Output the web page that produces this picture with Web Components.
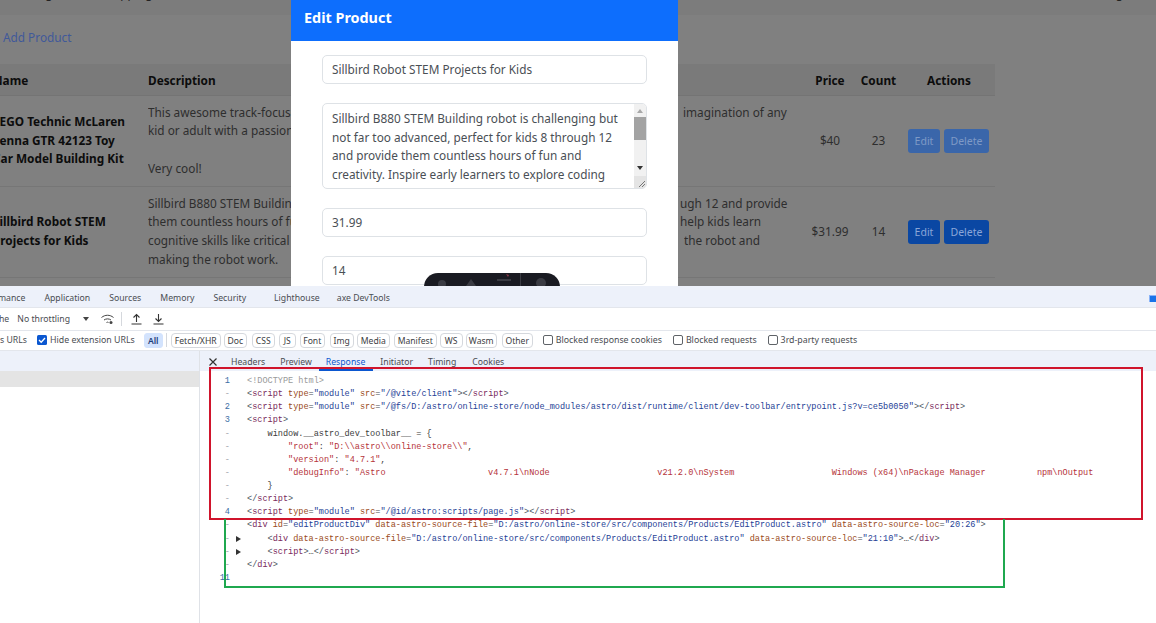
<!DOCTYPE html>
<html>
<head>
<meta charset="utf-8">
<style>
html, body { margin: 0; height: 100%; background: #fff; overflow: hidden; }
body { font-family: "Noto Sans", "Open Sans", sans-serif; }
</style>
</head>
<body>
<store-view>
  <product-row slot="rows" price="$40" count="23" faded>
    <span slot="name">LEGO Technic McLaren<br>Senna GTR 42123 Toy<br>Car Model Building Kit</span>
    <desc-line slot="desc" left="This awesome track-focused" right="imagination of any" at="535"></desc-line>
    <desc-line slot="desc" left="kid or adult with a passion"></desc-line>
    <desc-line slot="desc" left="&#160;"></desc-line>
    <desc-line slot="desc" left="Very cool!"></desc-line>
  </product-row>
  <product-row slot="rows" price="$31.99" count="14">
    <span slot="name">Sillbird Robot STEM<br>Projects for Kids</span>
    <desc-line slot="desc" left="Sillbird B880 STEM Building" right="ugh 12 and provide" at="532"></desc-line>
    <desc-line slot="desc" left="them countless hours of fun" right="help kids learn" at="532"></desc-line>
    <desc-line slot="desc" left="cognitive skills like critical" right="the robot and" at="536"></desc-line>
    <desc-line slot="desc" left="making the robot work."></desc-line>
  </product-row>
</store-view>
<dev-tools></dev-tools>

<script>
class DescLine extends HTMLElement {
    constructor() {
        super();
        const root = this.attachShadow({ mode: 'open' });
        const at = this.getAttribute('at') || 535;
        root.innerHTML = `
        <style>
          :host { display: grid; grid-template-columns: ${at}px auto; height: 18.67px; line-height: 18.67px; white-space: nowrap; }
          span { overflow: hidden; }
        </style>
        <span>${this.getAttribute('left')}</span><span>${this.getAttribute('right') || ''}</span>`;
    }
}
customElements.define('desc-line', DescLine);

class ProductRow extends HTMLElement {
    constructor() {
        super();
        const root = this.attachShadow({ mode: 'open' });
        const faded = this.hasAttribute('faded');
        const bg = faded ? '#3a66aa' : '#0a47a3';
        const fg = faded ? '#7f9ac6' : '#8aa6d8';
        root.innerHTML = `
        <style>
          :host { display: grid; grid-template-columns: 155px 668px 44px 53px 90px; height: 91px; border-bottom: 1px solid #767676; align-items: center; color: #222; box-sizing: border-box; }
          .name { padding-left: 8px; font-weight: 700; line-height: 18.67px; color: #0c0c0c; white-space: nowrap; margin-top: -2px; }
          .desc { padding-left: 8px; color: #2e2e2e; margin-top: -2px; }
          .num { text-align: center; color: #2e2e2e; margin-top: -2px; }
          .actions { display: flex; justify-content: center; gap: 4px; padding-right: 3px; }
          button { all: unset; height: 24px; line-height: 25px; border-radius: 3px; background: ${bg}; color: ${fg}; font-size: 10.5px; text-align: center; }
          .edit { width: 32px; }
          .del { width: 45px; }
        </style>
        <div class="name"><slot name="name"></slot></div>
        <div class="desc"><slot name="desc"></slot></div>
        <div class="num">${this.getAttribute('price')}</div>
        <div class="num">${this.getAttribute('count')}</div>
        <div class="actions"><button class="edit">Edit</button><button class="del">Delete</button></div>`;
    }
}
customElements.define('product-row', ProductRow);

class EditModal extends HTMLElement {
    constructor() {
        super();
        const root = this.attachShadow({ mode: 'open' });
        root.innerHTML = `
        <style>
          :host { position: absolute; left: 291px; top: 0; width: 387px; height: 340px; background: #fff; display: block; color: #4a4f55; }
          header { height: 41px; background: #0d6efd; color: #fff; font-size: 14.4px; font-weight: 700; line-height: 35px; padding-left: 13px; box-sizing: border-box; }
          form { display: flex; flex-direction: column; padding: 14px 31px 0; gap: 19px; }
          .field { height: 29px; border: 1px solid #dee2e6; border-radius: 5px; box-sizing: border-box; padding-left: 9px; line-height: 27px; white-space: nowrap; }
          .area { height: 86px; border: 1px solid #dee2e6; border-radius: 5px; box-sizing: border-box; padding: 5px 0 0 9px; line-height: 18.67px; position: relative; overflow: hidden; white-space: nowrap; }
          .bar { position: absolute; right: 0; top: 0; bottom: 0; width: 12px; background: #f1f1f1; }
          .thumb { position: absolute; left: 0; right: 0; top: 13px; height: 23px; background: #a3a3a3; }
          svg { position: absolute; display: block; }
        </style>
        <header>Edit Product</header>
        <form>
          <div class="field">Sillbird Robot STEM Projects for Kids</div>
          <div class="area">Sillbird B880 STEM Building robot is challenging but<br>not far too advanced, perfect for kids 8 through 12<br>and provide them countless hours of fun and<br>creativity. Inspire early learners to explore coding
            <div class="bar">
              <svg style="left:3px;top:5px" width="6" height="4"><path d="M3 0L6 4H0Z" fill="#a8a8a8"/></svg>
              <div class="thumb"></div>
              <svg style="left:3px;top:62px" width="6" height="4"><path d="M0 0H6L3 4Z" fill="#333"/></svg>
              <svg style="left:0;bottom:0" width="12" height="12"><rect width="12" height="12" fill="#e4e4e4"/><path d="M11 5L5 11M11 8L8 11" stroke="#777" fill="none"/></svg>
            </div>
          </div>
          <div class="field">31.99</div>
          <div class="field">14</div>
        </form>`;
    }
}
customElements.define('edit-modal', EditModal);

class DevToolbar extends HTMLElement {
    constructor() {
        super();
        const root = this.attachShadow({ mode: 'open' });
        root.innerHTML = `
        <style>
          :host { position: absolute; left: 424px; top: 273px; width: 136px; height: 30px; background: #1a1b22; border-radius: 14px 14px 0 0; display: block; }
          svg { display: block; }
        </style>
        <svg width="136" height="13" fill="#3a3b42">
          <circle cx="18" cy="11" r="4"/><path d="M42 13l5-7 5 7z"/><path d="M73 6h14v2H73z"/><path d="M82 1l3 1-1 2z" fill="#8b3a4a"/><path d="M96 0h1v13h-1z"/><circle cx="117" cy="10" r="5"/>
        </svg>`;
    }
}
customElements.define('dev-toolbar', DevToolbar);

class StoreView extends HTMLElement {
    constructor() {
        super();
        const root = this.attachShadow({ mode: 'open' });
        root.innerHTML = `
        <style>
          :host { display: block; position: relative; height: 286px; overflow: hidden; background: #808080; font-size: 11.8px; color: #222; }
          nav { height: 15px; background: #7c7c7c; overflow: hidden; display: flex; align-items: flex-start; }
          nav span { display: block; margin-top: -14px; line-height: 15px; white-space: nowrap; color: #222; }
          .add { margin: 13px 0 0 3px; height: 18px; line-height: 18px; color: #40599a; }
          .table { margin: 18px 0 0 -15px; width: 1010px; }
          .head { display: grid; grid-template-columns: 155px 668px 44px 53px 90px; height: 32px; align-items: center; background: #7a7a7a; border-bottom: 1px solid #747474; box-sizing: border-box; font-weight: 700; color: #0c0c0c; }
          .head div { text-align: center; }
          .head div.l { text-align: left; padding-left: 8px; }
        </style>
        <nav><span style="margin-left:10px">Catalog</span><span style="margin-left:47px">Shopping</span><span style="margin-left:950px">Login</span></nav>
        <div class="add">Add Product</div>
        <div class="table">
          <div class="head"><div class="l">Name</div><div class="l">Description</div><div>Price</div><div>Count</div><div style="padding-right:2px">Actions</div></div>
          <slot name="rows"></slot>
        </div>
        <edit-modal></edit-modal>
        <dev-toolbar></dev-toolbar>`;
    }
}
customElements.define('store-view', StoreView);

class FilterChip extends HTMLElement {
    constructor() {
        super();
        const root = this.attachShadow({ mode: 'open' });
        const w = this.getAttribute('w');
        root.innerHTML = `
        <style>
          :host { display: block; width: ${w}px; height: 15px; line-height: 14px; box-sizing: border-box; border: 1px solid #d5d8dd; border-radius: 4px; text-align: center; font-size: 8.6px; color: #3c4043; white-space: nowrap; flex: none; }
          :host([active]) { border-color: #d3e3fd; background: #d3e3fd; color: #1f3f7a; font-weight: 600; }
        </style><slot></slot>`;
    }
}
customElements.define('filter-chip', FilterChip);

class CheckItem extends HTMLElement {
    constructor() {
        super();
        const root = this.attachShadow({ mode: 'open' });
        const on = this.hasAttribute('checked');
        root.innerHTML = `
        <style>
          :host { display: flex; align-items: center; gap: 3px; font-size: 8.8px; color: #4a4d52; white-space: nowrap; flex: none; }
          svg { display: block; flex: none; }
        </style>
        ${on
            ? '<svg width="10" height="10"><rect width="10" height="10" rx="1.5" fill="#0b57d0"/><path d="M2 5l2.2 2.2L8 3" stroke="#fff" stroke-width="1.3" fill="none"/></svg>'
            : '<svg width="10" height="10"><rect x=".5" y=".5" width="9" height="9" rx="1.5" fill="#fff" stroke="#5f6368"/></svg>'}
        <slot></slot>`;
    }
}
customElements.define('check-item', CheckItem);

class CodeView extends HTMLElement {
    constructor() {
        super();
        const root = this.attachShadow({ mode: 'open' });
        const t = s => `<b>${s}</b>`;
        const a = s => `<i>${s}</i>`;
        const v = s => `<u>${s}</u>`;
        const s = x => `<em>${x}</em>`;
        const close = n => `<b>&lt;/</b><q>${n}</q><b>&gt;</b>`;
        const open = n => `<b>&lt;</b><q>${n}</q>`;
        const mod = src => `${open('script')} ${a('type')}=${v('"module"')} ${a('src')}=${v(src)}<b>&gt;</b>${close('script')}`;
        const file = 'D:/astro/online-store/src/components/Products/EditProduct.astro';
        const lines = [
            ['1', '<span class="dt">&lt;!DOCTYPE html&gt;</span>'],
            ['-', mod('"/@vite/client"')],
            ['2', mod('"/@fs/D:/astro/online-store/node_modules/astro/dist/runtime/client/dev-toolbar/entrypoint.js?v=ce5b0050"')],
            ['3', open('script') + t('&gt;')],
            ['-', `    <span class="js">window.__astro_dev_toolbar__ = {</span>`],
            ['-', `        ${s('"root"')}<span class="js">:</span> ${s('"D:\\\\astro\\\\online-store\\\\"')}<span class="js">,</span>`],
            ['-', `        ${s('"version"')}<span class="js">:</span> ${s('"4.7.1"')}<span class="js">,</span>`],
            ['-', `        ${s('"debugInfo"')}<span class="js">:</span> ${s('"Astro' + ' '.repeat(20) + 'v4.7.1\\nNode' + ' '.repeat(21) + 'v21.2.0\\nSystem' + ' '.repeat(19) + 'Windows (x64)\\nPackage Manager' + ' '.repeat(10) + 'npm\\nOutput')}`],
            ['-', `    <span class="js">}</span>`],
            ['-', close('script')],
            ['4', mod('"/@id/astro:scripts/page.js"')],
            ['-', `${open('div')} ${a('id')}=${v('"editProductDiv"')} ${a('data-astro-source-file')}=${v('"' + file + '"')} ${a('data-astro-source-loc')}=${v('"20:26"')}<b>&gt;</b>`],
            ['-', `    ${open('div')} ${a('data-astro-source-file')}=${v('"' + file + '"')} ${a('data-astro-source-loc')}=${v('"21:10"')}<b>&gt;</b><span class="js">…</span>${close('div')}`, true],
            ['-', `    ${open('script')}<b>&gt;</b><span class="js">…</span>${close('script')}`, true],
            ['-', close('div')],
            ['11', ''],
        ];
        root.innerHTML = `
        <style>
          :host { display: block; padding-top: 4px; font-family: "Liberation Mono", monospace; font-size: 8.56px; }
          .row { display: grid; grid-template-columns: 36px 11px 1fr; height: 13.13px; line-height: 13.13px; white-space: pre; }
          .n { text-align: right; color: #a0a4aa; position: relative; left: -6px; }
          .n.num { color: #3a6ea5; }
          .arrow { display: flex; align-items: center; }
          b { font-weight: 400; color: #4a5560; }
          q { quotes: none; color: #7a2a5c; }
          q::before, q::after { content: none; }
          i { font-style: normal; color: #9a4a20; }
          u { text-decoration: none; color: #1f3f96; }
          em { font-style: normal; color: #b5333a; }
          .js { color: #3c3c3c; }
          .dt { color: #9a9a9a; }
        </style>
        ${lines.map(l => `<div class="row"><span class="n ${l[0] === '-' ? '' : 'num'}">${l[0]}</span><span class="arrow">${l[2] ? '<svg width="5" height="6"><path d="M0 0L5 3L0 6Z" fill="#333"/></svg>' : ''}</span><span>${l[1]}</span></div>`).join('')}`;
    }
}
customElements.define('code-view', CodeView);

class DevTools extends HTMLElement {
    constructor() {
        super();
        const root = this.attachShadow({ mode: 'open' });
        root.innerHTML = `
        <style>
          :host { display: flex; flex-direction: column; height: 337px; background: #fff; position: relative; font-size: 8.7px; color: #4a4d52; overflow: hidden; }
          .tabs { height: 21px; padding-top: 3px; box-sizing: border-box; background: #edf1fa; display: flex; align-items: center; white-space: nowrap; flex: none; position: relative; }
          .tabs span { display: block; }
          .tools { height: 23px; display: flex; align-items: center; border-top: 1px solid #e3e6ec; box-sizing: border-box; flex: none; white-space: nowrap; }
          .filters { height: 21px; padding-bottom: 1px; display: flex; align-items: center; border-top: 1px solid #e3e6ec; border-bottom: 1px solid #e3e6ec; box-sizing: border-box; flex: none; white-space: nowrap; }
          .main { flex: 1; display: grid; grid-template-columns: 200px 1fr; min-height: 0; }
          .list { border-right: 1px solid #dfe2e7; }
          .list .head { height: 20px; background: #edf1fa; }
          .list .sel { height: 16px; background: #e4e4e4; }
          .detail { min-width: 0; overflow: hidden; }
          .sub { height: 20px; padding-top: 1px; box-sizing: border-box; background: #edf1fa; display: flex; align-items: center; white-space: nowrap; position: relative; }
          .sub .on { color: #0b57d0; }
          .sub .line { position: absolute; left: 119px; top: 18px; width: 54px; height: 2px; background: #0b57d0; }
          .sep { width: 1px; height: 14px; background: #d5d8dd; flex: none; }
          svg { display: block; flex: none; }
          .badge { position: absolute; right: 0; top: 9px; width: 7px; height: 7px; background: #1a73e8; box-shadow: inset 2px 2px 0 -1px #8ab4f8; }
          .red, .green { position: absolute; box-sizing: border-box; }
          .red { left: 209px; top: 81px; width: 934px; height: 153px; border: 2px solid #d0142c; }
          .green { left: 224px; top: 233px; width: 781px; height: 69px; border: 2px solid #1fa84f; border-top-width: 0; }
        </style>
        <div class="tabs">
          <span style="margin-left:-2px">mance</span>
          <span style="margin-left:19px">Application</span>
          <span style="margin-left:19px">Sources</span>
          <span style="margin-left:19px">Memory</span>
          <span style="margin-left:19px">Security</span>
          <span style="margin-left:28px">Lighthouse</span>
          <span style="margin-left:17px">axe DevTools</span>
          <div class="badge"></div>
        </div>
        <div class="tools">
          <span style="margin-left:-1px">he</span>
          <span style="margin-left:8px">No throttling</span>
          <svg style="margin-left:13px" width="6" height="4"><path d="M0 0H6L3 4Z" fill="#444"/></svg>
          <svg style="margin-left:12px" width="13" height="11" fill="none" stroke="#444"><path d="M.5 3.500C4 .5 9 .5 12.500 3.500M3 6C5 4.500 8 4.500 10 6M5.500 8.500C6 8 7 8 7.500 8.500"/><circle cx="10" cy="8.500" r="1.500" fill="#444" stroke="none"/></svg>
          <div class="sep" style="margin-left:7px"></div>
          <svg style="margin-left:9px" width="11" height="12" fill="none" stroke="#333" stroke-width="1.100"><path d="M5.500 9V1.500M2.500 4.500L5.500 1.500L8.500 4.500M.5 11H10.500"/></svg>
          <svg style="margin-left:11px" width="11" height="12" fill="none" stroke="#333" stroke-width="1.100"><path d="M5.500 1V8.500M2.500 5.500L5.500 8.500L8.500 5.500M.5 11H10.500"/></svg>
        </div>
        <div class="filters">
          <span style="flex:none;width:27px">s URLs</span>
          <check-item checked style="margin-left:10px">Hide extension URLs</check-item>
          <filter-chip active w="19" style="margin-left:9px;border-radius:3px">All</filter-chip>
          <div class="sep" style="margin-left:3px"></div>
          <filter-chip w="50" style="margin-left:4px">Fetch/XHR</filter-chip>
          <filter-chip w="23" style="margin-left:3px">Doc</filter-chip>
          <filter-chip w="23" style="margin-left:5px">CSS</filter-chip>
          <filter-chip w="17" style="margin-left:4px">JS</filter-chip>
          <filter-chip w="25" style="margin-left:4px">Font</filter-chip>
          <filter-chip w="24" style="margin-left:5px">Img</filter-chip>
          <filter-chip w="33" style="margin-left:3px">Media</filter-chip>
          <filter-chip w="43" style="margin-left:4px">Manifest</filter-chip>
          <filter-chip w="23" style="margin-left:3px">WS</filter-chip>
          <filter-chip w="31" style="margin-left:3px">Wasm</filter-chip>
          <filter-chip w="31" style="margin-left:5px">Other</filter-chip>
          <check-item style="margin-left:10px">Blocked response cookies</check-item>
          <check-item style="margin-left:11px">Blocked requests</check-item>
          <check-item style="margin-left:11px">3rd-party requests</check-item>
        </div>
        <div class="main">
          <div class="list"><div class="head"></div><div class="sel"></div></div>
          <div class="detail">
            <div class="sub">
              <svg style="margin-left:9px" width="8" height="8" stroke="#333" stroke-width="1.200"><path d="M.5 .5L7.500 7.500M7.500 .5L.5 7.500"/></svg>
              <span style="margin-left:14px">Headers</span>
              <span style="margin-left:15px">Preview</span>
              <span class="on" style="margin-left:14px">Response</span>
              <span style="margin-left:15px">Initiator</span>
              <span style="margin-left:15px">Timing</span>
              <span style="margin-left:16px">Cookies</span>
              <div class="line"></div>
            </div>
            <code-view></code-view>
          </div>
        </div>
        <div class="red"></div>
        <div class="green"></div>`;
    }
}
customElements.define('dev-tools', DevTools);
</script>
</body>
</html>
